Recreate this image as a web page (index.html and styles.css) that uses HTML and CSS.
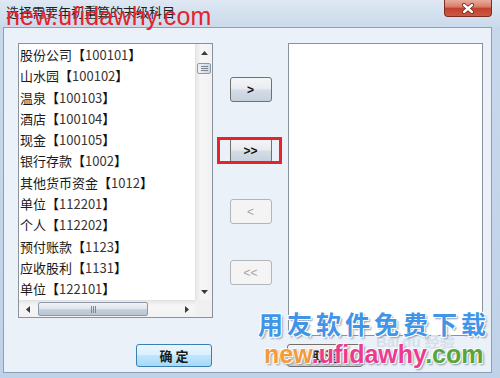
FILE: index.html
```html
<!DOCTYPE html>
<html lang="zh-CN">
<head>
    <meta charset="UTF-8">
    <meta name="viewport" content="width=device-width, initial-scale=1.0">
    <title>选择需要年初重算的末级科目</title>
    <link rel="stylesheet" href="styles.css">
</head>
<body>
    <div class="titlebar">
        <span class="title">选择需要年初重算的末级科目</span>
        <div class="close">
            <svg width="14" height="11" viewBox="0 0 14 11">
                <path d="M3 2L11 9M11 2L3 9" stroke="#6a2418" stroke-width="4" stroke-linecap="round"/>
                <path d="M3 2L11 9M11 2L3 9" stroke="#fff" stroke-width="2.4" stroke-linecap="round"/>
            </svg>
        </div>
    </div>
    <div class="client">
        <div class="panes">
            <div class="listbox left">
                <ul class="items">
                    <li>股份公司<b>【</b><span class="code">100101</span><b>】</b></li>
                    <li>山水园<b>【</b><span class="code">100102</span><b>】</b></li>
                    <li>温泉<b>【</b><span class="code">100103</span><b>】</b></li>
                    <li>酒店<b>【</b><span class="code">100104</span><b>】</b></li>
                    <li>现金<b>【</b><span class="code">100105</span><b>】</b></li>
                    <li>银行存款<b>【</b><span class="code">1002</span><b>】</b></li>
                    <li>其他货币资金<b>【</b><span class="code">1012</span><b>】</b></li>
                    <li>单位<b>【</b><span class="code">112201</span><b>】</b></li>
                    <li>个人<b>【</b><span class="code">112202</span><b>】</b></li>
                    <li>预付账款<b>【</b><span class="code">1123</span><b>】</b></li>
                    <li>应收股利<b>【</b><span class="code">1131</span><b>】</b></li>
                    <li>单位<b>【</b><span class="code">122101</span><b>】</b></li>
                </ul>
                <div class="vscroll">
                    <div class="arrow"><svg width="7" height="4"><path d="M3.5 0L7 4H0z" fill="#3a3a3a"/></svg></div>
                    <div class="thumb vthumb"><i></i><i></i><i></i></div>
                    <div class="track"></div>
                    <div class="arrow"><svg width="7" height="4"><path d="M0 0H7L3.5 4z" fill="#3a3a3a"/></svg></div>
                </div>
                <div class="hscroll">
                    <div class="arrow"><svg width="4" height="7"><path d="M4 0V7L0 3.5z" fill="#3a3a3a"/></svg></div>
                    <div class="thumb hthumb"><i></i><i></i><i></i></div>
                    <div class="track"></div>
                    <div class="arrow"><svg width="4" height="7"><path d="M0 0L4 3.5L0 7z" fill="#3a3a3a"/></svg></div>
                </div>
                <div class="corner"></div>
            </div>
            <div class="mid">
                <button class="btn">&gt;</button>
                <div class="marked">
                    <button class="btn">&gt;&gt;</button>
                    <span class="redbox"></span>
                </div>
                <button class="btn" disabled>&lt;</button>
                <button class="btn" disabled>&lt;&lt;</button>
            </div>
            <div class="listbox right"></div>
        </div>
        <div class="footer">
            <button class="dbtn default">确 定</button>
            <button class="dbtn">取消</button>
        </div>
    </div>

    <!-- watermarks laid over the screenshot -->
    <div class="mark-top">new.ufidawhy.com</div>
    <div class="mark-baidu">Bai<span>du</span> 经验</div>
    <div class="mark-cn">用友软件免费下载</div>
    <div class="mark-url"><span class="o">new</span><span class="p">.ufidawhy</span><span class="g">.com</span></div>
</body>
</html>
```

FILE: styles.css
```css
body {
    margin: 0;
    width: 500px;
    height: 378px;
    overflow: hidden;
    position: relative;
    background: linear-gradient(#c9d9ec, #bfd2e8);
    font-family: "Noto Sans CJK SC", "Liberation Sans", sans-serif;
    font-size: 13px;
    color: #1a1a1a;
}
.titlebar {
    height: 27px;
    display: flex;
    align-items: flex-start;
    background: linear-gradient(#dfe8f3, #d2dfee 60%, #cbdaec);
}
.title {
    padding: 3px 0 0 6px;
    font-size: 13px;
    line-height: 18px;
    color: #1e1e1e;
}
.close {
    margin-left: auto;
    margin-right: 8px;
    width: 48px;
    height: 17px;
    box-sizing: border-box;
    border: 1px solid #7a2e22;
    border-top: none;
    border-radius: 0 0 4px 4px;
    background: linear-gradient(#e8ab9c, #d77a66 45%, #c2402c 50%, #cc5a42);
    display: flex;
    align-items: center;
    justify-content: center;
}
.client {
    margin-left: 3px;
    width: 489px;
    height: 346px;
    box-sizing: border-box;
    border: 1px solid #8aa0b9;
    background: #ebf1f8;
    padding: 15px 0 0 14px;
}
.panes {
    display: flex;
    align-items: flex-start;
}
.listbox {
    width: 195px;
    box-sizing: border-box;
    border: 1px solid #8a929c;
    background: #fff;
}
.listbox.left {
    height: 275px;
    display: grid;
    grid-template-columns: 176px 17px;
    grid-template-rows: 256px 17px;
}
.listbox.right {
    height: 293px;
}
.items {
    list-style: none;
    margin: 0;
    padding: 0 0 0 1px;
    overflow: hidden;
}
.items li {
    height: 21.3px;
    line-height: 21.3px;
    white-space: nowrap;
}
.items b {
    font-weight: bold;
    color: #111;
}
.code {
    color: #3a3333;
}
.vscroll {
    display: flex;
    flex-direction: column;
    background: linear-gradient(90deg, #e8e8e8, #f6f6f6 30%, #f2f2f2);
    border-left: 1px solid #e2e2e2;
}
.hscroll {
    display: flex;
    background: linear-gradient(#e8e8e8, #f6f6f6 30%, #f2f2f2);
    border-top: 1px solid #e2e2e2;
}
.corner {
    background: #f0f0f0;
}
.arrow {
    width: 17px;
    height: 17px;
    flex: none;
    display: flex;
    align-items: center;
    justify-content: center;
}
.vscroll .arrow {
    width: auto;
}
.hscroll .arrow {
    height: auto;
}
.track {
    flex: 1;
}
.thumb {
    flex: none;
    box-sizing: border-box;
    border: 1px solid #8d99a8;
    border-radius: 2px;
    display: flex;
    align-items: center;
    justify-content: center;
    gap: 1px;
}
.vthumb {
    height: 11px;
    margin: 2px 1px 0;
    flex-direction: column;
    background: linear-gradient(90deg, #f1f3f6, #dfe4ea 50%, #cdd5df);
}
.vthumb i {
    width: 7px;
    height: 1px;
    background: #7d8794;
}
.hthumb {
    width: 110px;
    margin: 1px 0 1px 2px;
    background: linear-gradient(#f0f3f7, #dde4ec 50%, #c4cfdc 55%, #b9c5d4);
}
.hthumb i {
    width: 1px;
    height: 7px;
    background: #7d8794;
}
.mid {
    width: 75px;
    display: flex;
    flex-direction: column;
    align-items: center;
    gap: 36px;
    padding-top: 34px;
}
.btn {
    width: 42px;
    height: 25px;
    padding: 0;
    border: 1px solid #707070;
    border-radius: 3px;
    background: linear-gradient(#f4f5f7, #e9ecf0 45%, #d4dbe5 55%, #c6d0dd);
    font-family: "Liberation Sans", sans-serif;
    font-size: 12px;
    font-weight: bold;
    color: #111;
}
.btn:disabled {
    border-color: #b2b6ba;
    background: #f4f4f4;
    color: #a6a6a6;
    font-weight: normal;
}
.marked {
    position: relative;
    height: 25px;
}
.redbox {
    position: absolute;
    left: -13px;
    right: -10px;
    top: -1px;
    bottom: -1px;
    border: 3px solid #e5232a;
}
.footer {
    display: flex;
    gap: 75px;
    padding-left: 118px;
    margin-top: 8px;
}
.dbtn {
    width: 76px;
    height: 23px;
    padding: 0;
    border: 1px solid #707070;
    border-radius: 3px;
    background: linear-gradient(#f3f3f3, #ebebeb 50%, #dddddd 50%, #cfcfcf);
    font-family: "Noto Sans CJK SC", sans-serif;
    font-size: 13px;
    font-weight: bold;
    color: #1a1a1a;
}
.dbtn.default {
    border-color: #3c7fb1;
    background: linear-gradient(#eaf6fd, #d9f0fc 50%, #bee6fd 50%, #a7d9f5);
}
.mark-top {
    position: absolute;
    left: 6px;
    top: 4px;
    font-family: "Liberation Sans", sans-serif;
    font-size: 25px;
    line-height: 25px;
    letter-spacing: 0.2px;
    color: #e5232a;
}
.mark-baidu {
    position: absolute;
    left: 376px;
    top: 330px;
    font-family: "Liberation Sans", "Noto Sans CJK SC", sans-serif;
    font-size: 15px;
    font-weight: bold;
    color: #d6dfe9;
}
.mark-baidu span {
    margin-left: 3px;
}
.mark-cn {
    position: absolute;
    left: 258px;
    top: 308px;
    font-family: "Noto Sans CJK SC", sans-serif;
    font-size: 25px;
    line-height: 30px;
    font-weight: bold;
    letter-spacing: 4px;
    color: #4194e6;
    text-shadow: 1px 1px 0 #fff, -1px -1px 0 #fff, 1px -1px 0 #fff, -1px 1px 0 #fff, 2px 2px 2px #8a9bb0;
}
.mark-url {
    position: absolute;
    left: 264px;
    top: 339px;
    font-family: "Liberation Sans", sans-serif;
    font-size: 25px;
    line-height: 30px;
    font-weight: bold;
    text-shadow: 1px 1px 0 #fff, -1px -1px 0 #fff, 2px 2px 2px #8a9bb0;
}
.mark-url .o {
    color: #f39a3a;
}
.mark-url .p {
    color: #ec3a8f;
}
.mark-url .g {
    color: #58a63a;
}
```
